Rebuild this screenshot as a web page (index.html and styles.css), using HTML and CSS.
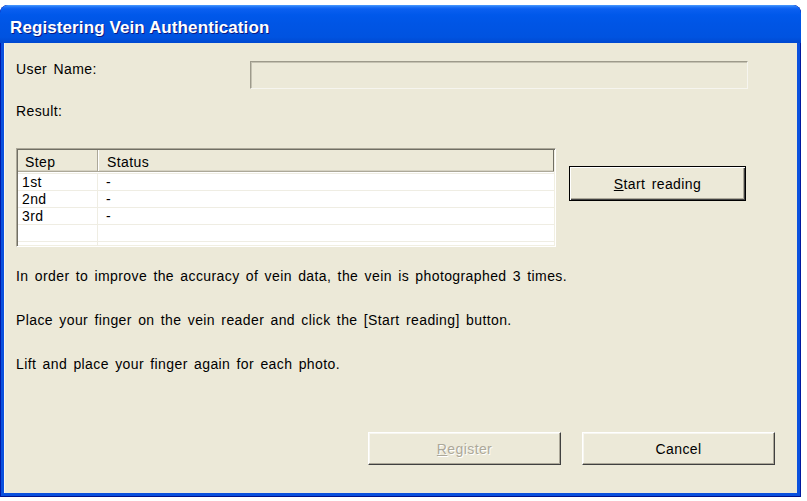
FILE: index.html
```html
<!DOCTYPE html>
<html>
<head>
<meta charset="utf-8">
<title>Registering Vein Authentication</title>
<link rel="stylesheet" href="styles.css">
</head>
<body>
<div class="window">
  <div class="titlebar"><span class="title">Registering Vein Authentication</span></div>
  <div class="client">
    <div class="user-row">
      <span class="label user-label">User Name:</span>
      <div class="field"></div>
    </div>
    <div class="label result-label">Result:</div>
    <div class="result-row">
      <div class="listview">
        <div class="lv-head">
          <div class="hcol step">Step</div>
          <div class="hcol status">Status</div>
        </div>
        <div class="lv-body">
          <div class="lv-row"><div class="cell step">1st</div><div class="cell status">-</div></div>
          <div class="lv-row"><div class="cell step">2nd</div><div class="cell status">-</div></div>
          <div class="lv-row"><div class="cell step">3rd</div><div class="cell status">-</div></div>
          <div class="lv-row"><div class="cell step"></div><div class="cell status"></div></div>
          <div class="lv-row"><div class="cell step"></div><div class="cell status"></div></div>
        </div>
      </div>
      <button class="btn default start"><u>S</u>tart reading</button>
    </div>
    <p class="info first">In order to improve the accuracy of vein data, the vein is photographed 3 times.</p>
    <p class="info">Place your finger on the vein reader and click the [Start reading] button.</p>
    <p class="info">Lift and place your finger again for each photo.</p>
    <div class="actions">
      <button class="btn action" disabled><u>R</u>egister</button>
      <button class="btn action">Cancel</button>
    </div>
  </div>
</div>
</body>
</html>
```
FILE: styles.css
```css
body {
  margin: 0;
  background: #ffffff;
  font-family: "Liberation Sans", Arial, sans-serif;
  font-size: 14px;
  letter-spacing: 0.4px;
  word-spacing: 2px;
  line-height: 16px;
  color: #000;
}

.window {
  margin-top: 5px;
  width: 801px;
  height: 492px;
  border-radius: 8px 8px 0 0;
  background: #0a50de;
  box-shadow: inset 1px 0 #0019a8, inset -1px 0 #001a9e, inset 0 -1px #00138c;
  display: flex;
  flex-direction: column;
  overflow: hidden;
}

.titlebar {
  flex: none;
  height: 38px;
  box-sizing: border-box;
  padding: 14px 0 0 10px;
  background: linear-gradient(#4a9bff 0, #1f72f5 2px, #0a5ff0 4px, #0058ea 10px, #0055e5 50%, #0053e0 85%, #0048d0 100%);
  border-radius: 8px 8px 0 0;
}

.title {
  color: #ffffff;
  font-weight: bold;
  font-size: 17px;
  line-height: 18px;
  letter-spacing: 0.1px;
  word-spacing: 0;
  text-shadow: 1px 1px #0a1883;
}

.client {
  flex: 1;
  margin: 0 4px 4px 4px;
  background: #ece9d8;
  padding: 18px 22px 28px 12px;
  display: flex;
  flex-direction: column;
  box-shadow: inset 1px 0 #f8f6ee;
}

.user-row {
  display: flex;
  align-items: flex-start;
}

.user-label {
  width: 234px;
  flex: none;
  padding-top: 0;
}

.field {
  width: 496px;
  height: 26px;
  background: #ece9d8;
  border: 1px solid;
  border-color: #9d9a8b #f6f5ef #f6f5ef #9d9a8b;
  box-shadow: inset 1px 1px #c5c2b2;
}

.result-label {
  margin-top: 14px;
}

.result-row {
  margin-top: 29px;
  display: flex;
  align-items: flex-start;
}

.listview {
  width: 540px;
  height: 99px;
  box-sizing: border-box;
  border: 1px solid;
  border-color: #aca899 #ffffff #ffffff #aca899;
  box-shadow: inset 1px 1px #716f64, inset -1px -1px #f1efe2;
  background: #ffffff;
  padding: 1px;
  overflow: hidden;
}

.lv-head {
  display: flex;
  height: 22px;
  box-sizing: border-box;
  background: #ece9d8;
  border-bottom: 1px solid #aca899;
  box-shadow: inset 0 -1px #d6d2c2;
}

.hcol {
  box-sizing: border-box;
  padding: 4px 0 0 0;
}

.hcol.step {
  width: 80px;
  padding-left: 7px;
  border-right: 1px solid #aca899;
  box-shadow: 1px 0 #ffffff;
}

.hcol.status {
  flex: 1;
  padding-left: 9px;
  border-right: 1px solid #716f64;
}

.lv-body {
  padding-top: 1px;
}

.lv-row {
  display: flex;
  height: 17px;
  box-sizing: border-box;
  border-top: 1px solid #efede3;
}

.cell.step {
  width: 80px;
  padding-left: 4px;
  box-sizing: border-box;
  border-right: 1px solid #efede3;
}

.cell.status {
  flex: 1;
  padding-left: 8px;
}

.btn {
  font: inherit;
  letter-spacing: inherit;
  word-spacing: inherit;
  color: #000;
  background: #ece9d8;
  border: 1px solid;
  border-color: #ffffff #404040 #404040 #ffffff;
  box-shadow: inset -1px -1px #aca899, inset 1px 1px #f7f6f0;
  padding: 0;
  margin: 0;
}

.btn.default {
  border-color: #000;
  box-shadow: inset 1px 1px #ffffff, inset -1px -1px #404040, inset -2px -2px #aca899;
}

.start {
  width: 177px;
  height: 35px;
  margin: 18px 0 0 13px;
}

.btn:disabled {
  color: #aca899;
  text-shadow: 1px 1px #ffffff;
}

.info {
  margin: 0;
}

.info + .info {
  margin-top: 28px;
}

.info.first {
  margin-top: 21px;
}

.actions {
  margin-top: auto;
  display: flex;
  justify-content: flex-end;
  gap: 21px;
}

.action {
  width: 193px;
  height: 33px;
}
```
